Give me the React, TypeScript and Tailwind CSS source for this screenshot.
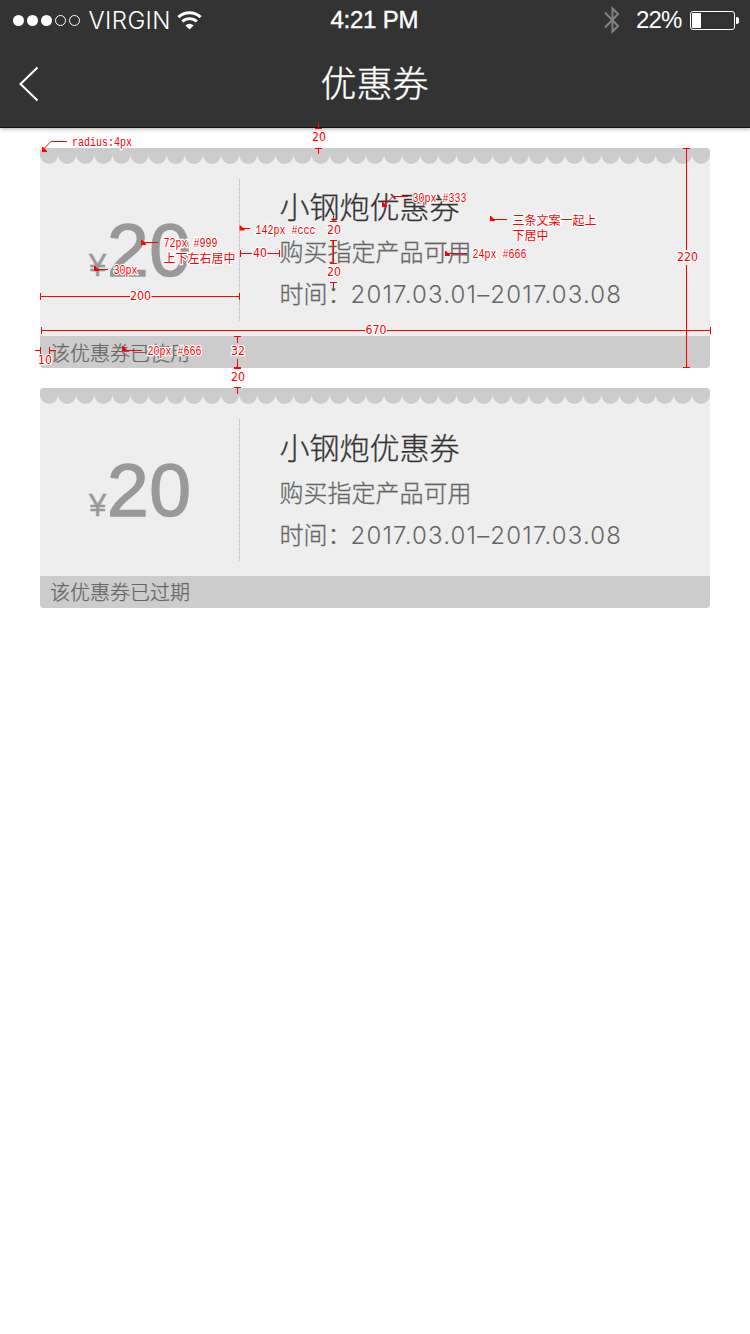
const CJK = "font-['Noto_Sans_CJK_SC',sans-serif]";

function StatusBar() {
  return (
    <div className="flex h-10 items-center justify-between pl-[13px] pr-[11px] font-['Liberation_Sans',sans-serif] text-2xl leading-10 text-white">
      <div className="flex w-[260px] items-center">
        <div className="mt-px flex gap-[3px]">
          <i className="size-[11px] rounded-full bg-white" />
          <i className="size-[11px] rounded-full bg-white" />
          <i className="size-[11px] rounded-full bg-white" />
          <i className="size-[11px] rounded-full border border-white" />
          <i className="size-[11px] rounded-full border border-white" />
        </div>
        <span className="ml-[8.5px] w-[82px] whitespace-nowrap pt-px font-['Inter',sans-serif] text-[24px] font-light tracking-[0.4px]">VIRGIN</span>
        <svg className="ml-[6px] h-[19px] w-[25px]" viewBox="0 0 25 19" fill="none" stroke="white">
          <path d="M1.4 6.2A16 16 0 0 1 23.6 6.2" strokeWidth="3" />
          <path d="M5.2 10.6A10.6 10.6 0 0 1 19.8 10.6" strokeWidth="2.8" />
          <path d="M12.5 18.5L8.4 14.4A6 6 0 0 1 16.6 14.4Z" fill="white" stroke="none" />
        </svg>
      </div>
      <span className="w-[91px] whitespace-nowrap tracking-[-0.25px] [-webkit-text-stroke:0.4px_white]">4:21 PM</span>
      <div className="flex w-[260px] items-center justify-end">
        <svg className="mr-[17px] h-7 w-4" viewBox="0 0 16 28" fill="none" stroke="#808080" strokeWidth="2">
          <path d="M2 6.5L15 20L9.5 25.5V2.5L15 8L2 21.5" />
        </svg>
        <span className="w-[48px] whitespace-nowrap tracking-[-0.9px]">22%</span>
        <svg className="ml-[6px] h-[19px] w-[49px]" viewBox="0 0 49 19">
          <rect x="0.5" y="0.5" width="44" height="18" rx="2.5" fill="none" stroke="white" />
          <rect x="2" y="2" width="9" height="15" rx="0.5" fill="white" />
          <path d="M46 6a3.5 3.5 0 0 1 0 7Z" fill="white" />
        </svg>
      </div>
    </div>
  );
}

function Header() {
  return (
    <header className="h-32 border-b border-[#111] bg-[#333] shadow-[0_1px_4px_rgba(0,0,0,0.35)]">
      <StatusBar />
      <div className="flex h-[87px] items-center">
        <svg className="ml-[19px] h-[36px] w-5" viewBox="0 0 20 36" fill="none" stroke="white" strokeWidth="2">
          <path d="M18.5 1.5L1.5 18L18.5 34.5" />
        </svg>
        <h1 className={`${CJK} flex-1 pb-[5px] pr-[40px] text-center text-[36px] font-light leading-[82px] text-white [-webkit-text-stroke:0.4px_white]`}>优惠券</h1>
      </div>
    </header>
  );
}

function Scallops() {
  const n = 37;
  const pitch = 670 / n;
  return (
    <svg className="block h-4 w-full" viewBox="0 0 670 16" fill="#ccc">
      <rect width="670" height="7" />
      {Array.from({ length: n }, (_, i) => (
        <circle key={i} cx={(i + 0.5) * pitch} cy="7" r="9" />
      ))}
    </svg>
  );
}

function Coupon({ status, textPad, statusPad }: { status: string; textPad: string; statusPad: string }) {
  return (
    <article className="flex h-[220px] flex-col overflow-hidden rounded bg-[#eee]">
      <Scallops />
      <div className="flex h-[172px]">
        <div className="flex w-[199px] items-baseline pl-[49px] font-['Liberation_Sans',sans-serif] text-[#999]">
          <span className="w-[18px] text-[31px] [-webkit-text-stroke:0.5px_#999]">¥</span>
          <span className="text-[75px] leading-[172px] tracking-[0.5px] [-webkit-text-stroke:1.4px_#999]">20</span>
        </div>
        <svg className="mt-[15px] h-[142px] w-px" viewBox="0 0 1 142">
          <path d="M0.5 0V142" stroke="#ccc" strokeDasharray="7 1" />
        </svg>
        <div className={`${CJK} ${textPad} ml-[39.5px] whitespace-nowrap font-light`}>
          <h2 className="h-[45px] text-[30px] leading-[42px] text-[#333] [-webkit-text-stroke:0.3px_#333]">小钢炮优惠券</h2>
          <p className="h-[42px] text-2xl leading-[44px] text-[#666] [-webkit-text-stroke:0.3px_#666]">购买指定产品可用</p>
          <p className="flex h-[42px] text-2xl leading-[44px] text-[#666]">
            <span className="w-[71px] [-webkit-text-stroke:0.3px_#666]">时间：</span>
            <span className="pt-[2px] font-['Inter',sans-serif] tracking-[1.18px]">2017.03.01–2017.03.08</span>
          </p>
        </div>
      </div>
      <footer className={`${CJK} ${statusPad} h-8 bg-[#ccc] pl-[10px] text-[20px] font-light leading-8 text-[#666] [-webkit-text-stroke:0.25px_#666]`}>{status}</footer>
    </article>
  );
}

type Note = { x: number; y: number; w: number; t: string; kind: "num" | "mono" | "cjk" };

const notes: Note[] = [
  { x: 72, y: 146, w: 60, t: "radius:4px", kind: "mono" },
  { x: 312, y: 141, w: 14, t: "20", kind: "num" },
  { x: 163.5, y: 247, w: 54, t: "72px #999", kind: "mono" },
  { x: 163.5, y: 262.5, w: 72, t: "上下左右居中", kind: "cjk" },
  { x: 255.5, y: 233.5, w: 60, t: "142px #ccc", kind: "mono" },
  { x: 412.5, y: 202, w: 54, t: "30px #333", kind: "mono" },
  { x: 512.5, y: 225, w: 84, t: "三条文案一起上", kind: "cjk" },
  { x: 512.5, y: 240, w: 36, t: "下居中", kind: "cjk" },
  { x: 327, y: 234, w: 14, t: "20", kind: "num" },
  { x: 327, y: 276, w: 14, t: "20", kind: "num" },
  { x: 253, y: 257, w: 14, t: "40", kind: "num" },
  { x: 472.5, y: 258, w: 54, t: "24px #666", kind: "mono" },
  { x: 113.5, y: 274, w: 24, t: "30px", kind: "mono" },
  { x: 130, y: 300, w: 21, t: "200", kind: "num" },
  { x: 365.5, y: 334, w: 21, t: "670", kind: "num" },
  { x: 677, y: 261, w: 21, t: "220", kind: "num" },
  { x: 38, y: 364, w: 14, t: "10", kind: "num" },
  { x: 231, y: 355, w: 14, t: "32", kind: "num" },
  { x: 231, y: 381, w: 14, t: "20", kind: "num" },
  { x: 147.5, y: 355, w: 54, t: "20px #666", kind: "mono" },
];

const rules = [
  "M44.5 148L51 141.5H67",
  "M318.5 123V128M315 128.5H322M315 148.5H322M318.5 148V154",
  "M143 242.5H158M241 228.5H250M384 205.5L393 196.5H408M492 219.5H507",
  "M333.5 216V221M330 221.5H337M330 240.5H337M333.5 240V263M330 263.5H337M330 282.5H337M333.5 282V289",
  "M240.5 250V257M241 253.5H252M267 253.5H279M279.5 250V257",
  "M447 253.5H467M96 269.5H108M124 350.5H142",
  "M40.5 293V300M41 296.5H130M151 296.5H239M239.5 293V300",
  "M41.5 327V334M42 330.5H365M387 330.5H710M710.5 327V334",
  "M683 148.5H690M686.5 149V250M686.5 265V367M683 367.5H690",
  "M35 350.5H40M40.5 347V354M49.5 347V354M50 350.5H56",
  "M234 336.5H241M237.5 337V343M237.5 359V367M234 367.5H241M234 368.5H241M234 387.5H241M237.5 388V394",
];

const heads: [number, number][] = [
  [42, 152], [141, 245], [239.5, 230.5], [382, 207], [490, 221], [445, 256], [94, 271], [122, 351],
];

const fonts = {
  num: "font-['DejaVu_Sans',sans-serif] text-[12px]",
  mono: "font-['Liberation_Mono',monospace] text-[12px] [stroke-width:2.5px]",
  cjk: "font-['Noto_Sans_CJK_SC',sans-serif] text-[12px]",
};

function Annotations() {
  return (
    <svg className="pointer-events-none absolute left-0 top-0 h-[400px] w-[750px]" viewBox="0 0 750 400">
      <path d={rules.join("")} fill="none" stroke="#f00" />
      {heads.map(([x, y]) => (
        <path key={`${x}-${y}`} d={`M${x} ${y}v-5h1l4 4v1z`} fill="#f00" />
      ))}
      {notes.map((n) => (
        <text
          key={`${n.x}-${n.y}`}
          x={n.x}
          y={n.y}
          textLength={n.w}
          lengthAdjust="spacingAndGlyphs"
          fill="#f00"
          stroke="#fff"
          strokeWidth="2.5"
          paintOrder="stroke"
          className={fonts[n.kind]}
        >
          {n.t}
        </text>
      ))}
    </svg>
  );
}

export default function App() {
  return (
    <div className="relative h-[1334px] w-[750px] overflow-hidden bg-white">
      <Header />
      <main className="flex flex-col gap-5 px-10 pt-5">
        <Coupon status="该优惠券已使用" textPad="pt-[20px]" statusPad="pt-px" />
        <Coupon status="该优惠券已过期" textPad="pt-[21px]" statusPad="pt-0" />
      </main>
      <Annotations />
    </div>
  );
}
